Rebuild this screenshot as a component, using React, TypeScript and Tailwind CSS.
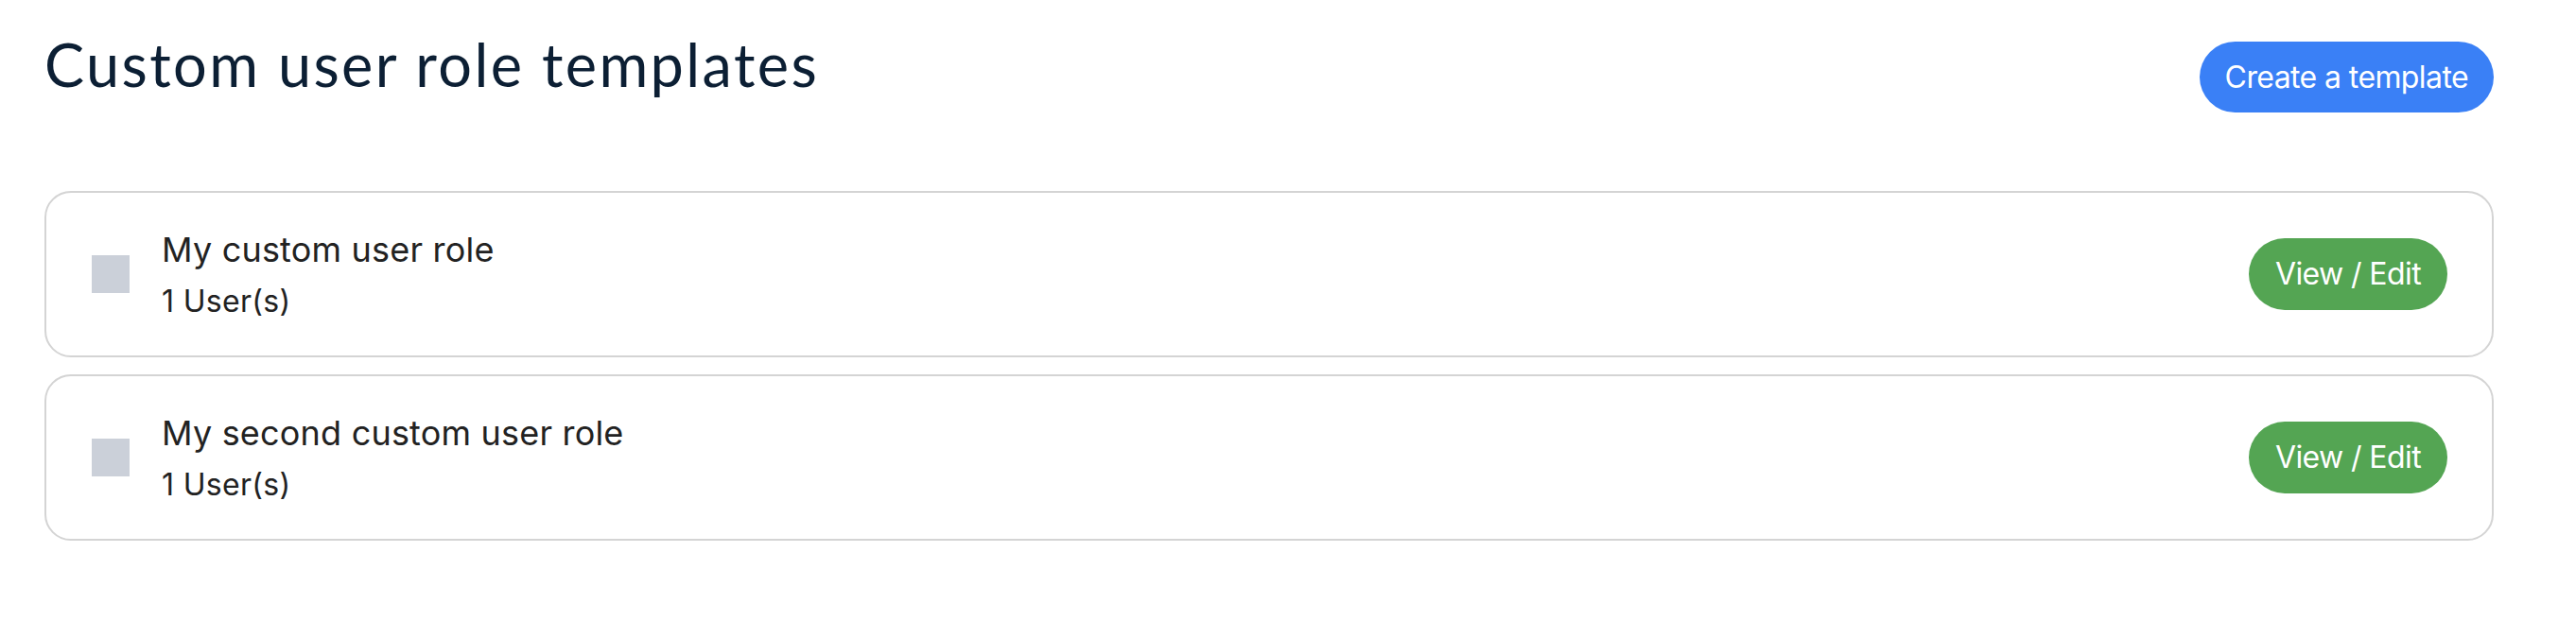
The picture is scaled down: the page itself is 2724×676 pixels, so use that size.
import { useState } from 'react';

type Role = {
  id: number;
  name: string;
  users: number;
};

const roles: Role[] = [
  { id: 1, name: 'My custom user role', users: 1 },
  { id: 2, name: 'My second custom user role', users: 1 },
];

function RoleCard({ role, checked, onToggle }: { role: Role; checked: boolean; onToggle: () => void }) {
  return (
    <div className="flex items-center h-[176px] pl-[48px] pr-[47px] border-2 border-[#d4d4d4] rounded-[28px] bg-white">
      <button
        onClick={onToggle}
        className={`w-10 h-10 shrink-0 ${checked ? 'bg-[#9aa3b2]' : 'bg-[#cbd0d9]'}`}
        aria-label="Select role"
      />
      <div className="ml-[34px] flex-1 font-['Inter',sans-serif] text-[#222222]">
        <div className="text-[36px] leading-[48px] tracking-[0.2px]">{role.name}</div>
        <div className="text-[32px] leading-[44px] mt-[9px] tracking-[0.3px]">{role.users} User(s)</div>
      </div>
      <button className="h-[76px] px-[28px] rounded-full bg-[#54a553] text-white text-[32px] tracking-[-0.6px] font-['Inter',sans-serif]">
        View / Edit
      </button>
    </div>
  );
}

export default function App() {
  const [selected, setSelected] = useState<number[]>([]);

  const toggle = (id: number) => {
    setSelected(prev => (prev.includes(id) ? prev.filter(x => x !== id) : [...prev, id]));
  };

  return (
    <div className="min-h-screen bg-white pl-[47px] pr-[87px] pt-[30px]">
      {/* Header */}
      <div className="flex items-start justify-between">
        <h1 className="text-[63px] leading-[76px] tracking-[2.4px] text-[#0c1f34] font-['Lato',sans-serif]">
          Custom user role templates
        </h1>
        <button className="mt-[14px] h-[75px] px-[27px] rounded-full bg-[#3a80f6] text-white text-[32px] tracking-[-0.6px] font-['Inter',sans-serif]">
          Create a template
        </button>
      </div>

      {/* Role list */}
      <div className="mt-[83px] flex flex-col gap-[18px]">
        {roles.map(role => (
          <RoleCard
            key={role.id}
            role={role}
            checked={selected.includes(role.id)}
            onToggle={() => toggle(role.id)}
          />
        ))}
      </div>
    </div>
  );
}
